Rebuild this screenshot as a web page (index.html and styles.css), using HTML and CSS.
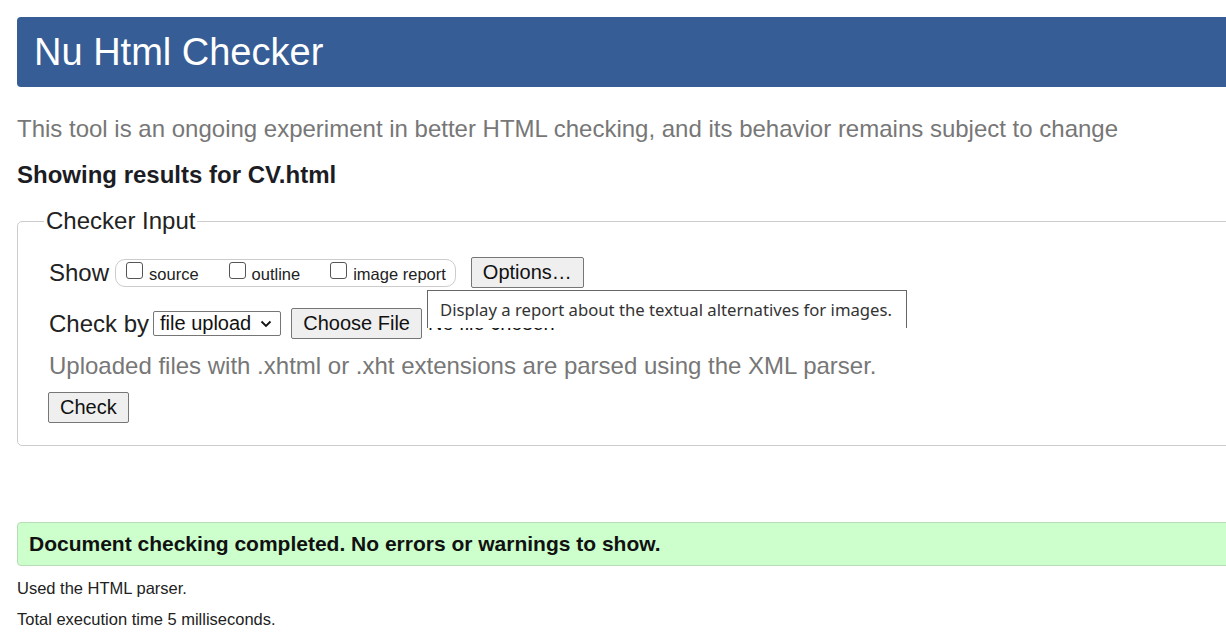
FILE: index.html
```html
<!DOCTYPE html>
<html lang="en">
<head>
<meta charset="utf-8">
<title>Nu Html Checker</title>
<link rel="stylesheet" href="styles.css">
</head>
<body>
<div class="page">
  <h1 class="banner">Nu Html Checker</h1>
  <p class="intro">This tool is an ongoing experiment in better HTML checking, and its behavior remains subject to change</p>
  <p class="showing">Showing results for CV.html</p>

  <fieldset class="checker">
    <legend class="legend">Checker Input</legend>
    <div class="row show-row">
      <span class="row-label">Show</span>
      <span class="opts">
        <label class="opt"><input type="checkbox" class="cb"><span>source</span></label>
        <label class="opt"><input type="checkbox" class="cb"><span>outline</span></label>
        <label class="opt"><input type="checkbox" class="cb"><span>image report</span></label>
      </span>
      <button class="btn options">Options…</button>
    </div>
    <div class="row check-row">
      <span class="row-label">Check by</span>
      <span class="select"><span>file upload</span><svg class="chev" width="12" height="8" viewBox="0 0 12 8"><path d="M1.5 1.5 L6 6 L10.5 1.5" fill="none" stroke="#111" stroke-width="1.8"/></svg></span>
      <button class="btn choose">Choose File</button>
      <span class="nofile">No file chosen</span>
    </div>
    <p class="note">Uploaded files with .xhtml or .xht extensions are parsed using the XML parser.</p>
    <button class="btn check">Check</button>
    <div class="tooltip">Display a report about the textual alternatives for images.</div>
  </fieldset>

  <div class="success">Document checking completed. No errors or warnings to show.</div>
  <p class="info">Used the HTML parser.</p>
  <p class="info">Total execution time 5 milliseconds.</p>
</div>
</body>
</html>
```

FILE: styles.css
```css
html, body {
  margin: 0;
  padding: 0;
  overflow: hidden;
  background: #fff;
}

body {
  font-family: "Liberation Sans", Arial, sans-serif;
  color: #222;
}

.page {
  width: 1260px;
  padding: 17px 0 0 17px;
}

.banner {
  margin: 0;
  height: 70px;
  line-height: 70px;
  padding-left: 17px;
  background: #365d95;
  color: #fff;
  font-size: 38px;
  font-weight: normal;
  border-radius: 4px 0 0 4px;
}

.intro {
  margin: 28px 0 0;
  font-size: 24px;
  line-height: 28px;
  color: #777;
}

.showing {
  margin: 18px 0 0;
  font-size: 24px;
  line-height: 28px;
  font-weight: bold;
  color: #1c1c24;
}

.checker {
  position: relative;
  margin: 17px 0 0;
  padding: 0 0 22px 31px;
  border: 1px solid #ccc;
  border-radius: 5px;
  min-inline-size: 0;
}

.legend {
  margin-left: -5px;
  padding: 0 2px;
  font-size: 24px;
  line-height: 30px;
}

.row {
  display: flex;
  align-items: center;
  height: 31px;
}

.show-row {
  margin-top: 21px;
}

.row-label {
  font-size: 24px;
}

.opts {
  display: flex;
  align-items: center;
  gap: 30px;
  height: 26px;
  margin-left: 6px;
  padding: 0 9px 0 10px;
  border: 1px solid #ccc;
  border-radius: 10px;
}

.opt {
  display: flex;
  align-items: center;
  gap: 6px;
  font-size: 16.5px;
}

.opt span {
  position: relative;
  top: 2px;
}

.cb {
  appearance: none;
  -webkit-appearance: none;
  box-sizing: border-box;
  width: 17px;
  height: 17px;
  margin: 0;
  border: 1px solid #555;
  border-radius: 3px;
  background: #fff;
  position: relative;
  top: -2px;
}

.btn {
  font-family: "Liberation Sans", Arial, sans-serif;
  font-size: 20px;
  color: #111;
  background: #efefef;
  border: 1px solid #767676;
  border-radius: 2px;
  padding: 0 11px;
  height: 31px;
  margin: 0;
}

.options {
  margin-left: 15px;
}

.check-row {
  margin-top: 20px;
}

.select {
  display: inline-flex;
  align-items: center;
  gap: 9px;
  height: 25px;
  box-sizing: border-box;
  margin-left: 4px;
  padding: 0 8px 0 6px;
  border: 1px solid #767676;
  border-radius: 2px;
  font-size: 20px;
  color: #111;
}

.choose {
  margin-left: 10px;
}

.nofile {
  margin-left: 6px;
  font-size: 20px;
  color: #111;
}

.note {
  margin: 13px 0 0;
  font-size: 24px;
  line-height: 28px;
  color: #777;
}

.check {
  margin-top: 12px;
  margin-left: -1px;
  display: block;
}

.tooltip {
  position: absolute;
  left: 409px;
  top: 54px;
  width: 466px;
  height: 37px;
  padding-left: 12px;
  background: #fff;
  border: 1px solid #666;
  border-bottom: none;
  font-family: "Noto Sans", "Open Sans", sans-serif;
  font-size: 16.7px;
  line-height: 38px;
  color: #333;
}

.success {
  margin-top: 76px;
  height: 42px;
  line-height: 42px;
  padding-left: 11px;
  background: #ccffcc;
  border: 1px solid #b8dcb8;
  border-radius: 4px 0 0 4px;
  font-size: 21px;
  font-weight: bold;
  color: #111;
}

.info {
  margin: 0;
  font-size: 16.5px;
  line-height: 31px;
  color: #222;
}

.success + .info {
  margin-top: 7px;
}
```
